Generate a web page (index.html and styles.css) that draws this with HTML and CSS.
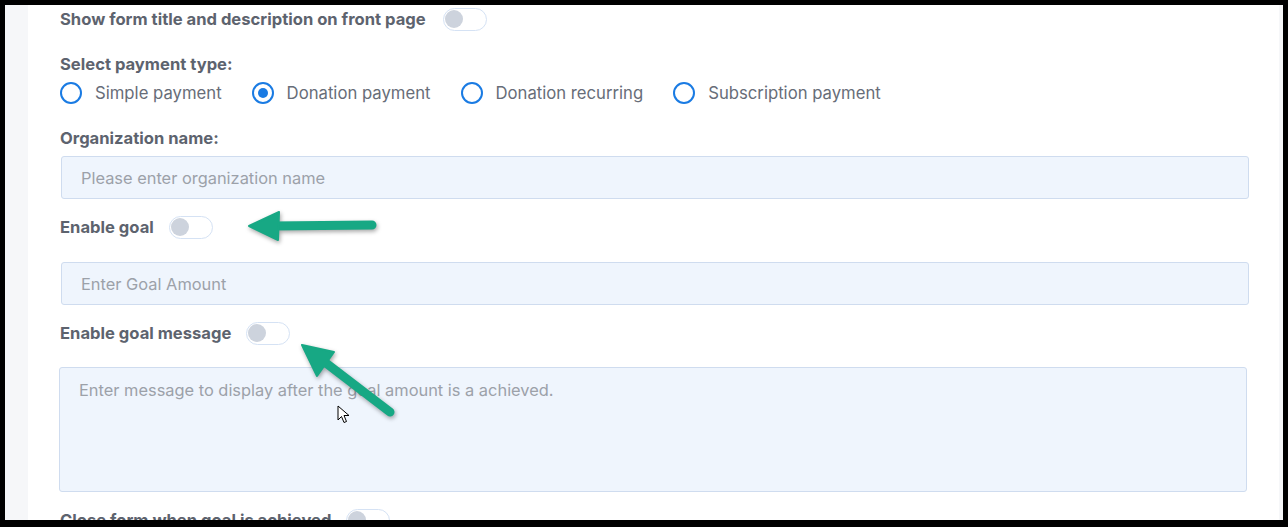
FILE: index.html
```html
<!DOCTYPE html>
<html lang="en">
<head>
    <meta charset="UTF-8">
    <meta name="viewport" content="width=device-width, initial-scale=1.0">
    <title>Payment form settings</title>
    <link rel="stylesheet" href="styles.css">
</head>
<body>
    <div class="frame">
        <div class="panel">
            <div class="switch-row first">
                <span class="label">Show form title and description on front page</span>
                <span class="toggle"></span>
            </div>

            <div class="label block">Select payment type:</div>
            <div class="radios">
                <label class="radio"><span class="dot"></span>Simple payment</label>
                <label class="radio"><span class="dot checked"></span>Donation payment</label>
                <label class="radio"><span class="dot"></span>Donation recurring</label>
                <label class="radio"><span class="dot"></span>Subscription payment</label>
            </div>

            <div class="label block">Organization name:</div>
            <input class="field" type="text" placeholder="Please enter organization name">

            <div class="switch-row">
                <span class="label">Enable goal</span>
                <span class="toggle"></span>
            </div>
            <input class="field spaced" type="text" placeholder="Enter Goal Amount">

            <div class="switch-row">
                <span class="label">Enable goal message</span>
                <span class="toggle"></span>
            </div>
            <textarea class="message" placeholder="Enter message to display after the goal amount is a achieved."></textarea>

            <div class="switch-row">
                <span class="label">Close form when goal is achieved</span>
                <span class="toggle"></span>
            </div>
        </div>
    </div>

    <!-- annotation arrows drawn over the screenshot -->
    <svg class="arrows" width="1288" height="527" viewBox="0 0 1288 527">
        <g fill="#17a884" stroke="#17a884" stroke-linecap="round" stroke-linejoin="round">
            <line x1="372" y1="225" x2="272" y2="226" stroke-width="9"/>
            <polygon points="249,226 279,212 278,240" stroke-width="2"/>
            <line x1="390" y1="412" x2="322" y2="360" stroke-width="9"/>
            <polygon points="302,345 334,352 317,376" stroke-width="2"/>
        </g>
    </svg>

    <!-- mouse pointer -->
    <svg class="cursor" width="14" height="20" viewBox="0 0 14 20">
        <path d="M1 1 L1 15 L4.5 11.5 L7 17.5 L9.5 16.5 L7 10.5 L12 10.5 Z" fill="#fff" stroke="#000" stroke-width="1"/>
    </svg>
</body>
</html>
```

FILE: styles.css
```css
body {
    margin: 0;
    background-color: #000;
    font-family: Inter, "Noto Sans", sans-serif;
    height: 527px;
    overflow: hidden;
}

.frame {
    margin: 5px 5px 0 5px;
    height: 515px;
    background-color: #f6f7f9; /* grey page edge */
    padding: 0 4px 0 23px;
    overflow: hidden;
}

.panel {
    background-color: #fff;
    height: 515px;
    padding: 3px 30px 0 32px;
    box-sizing: border-box;
    overflow: hidden;
}

.label {
    font-size: 16.6px;
    font-weight: 700;
    color: #5d636e;
    line-height: 20px;
}

.label.block {
    margin-top: 24px;
}

.switch-row {
    display: flex;
    align-items: center;
    gap: 15px;
    height: 22px;
    margin-top: 17px;
}

.switch-row.first {
    margin-top: 0;
    gap: 17px;
}

.toggle {
    width: 44px;
    height: 23px;
    box-sizing: border-box;
    border: 1.5px solid #d5e2f4;
    border-radius: 12px;
    background-color: #fff;
    position: relative;
}

.toggle::before {
    content: "";
    position: absolute;
    left: 1px;
    top: 1px;
    width: 18px;
    height: 18px;
    border-radius: 50%;
    background-color: #cdd3dd;
}

.radios {
    display: flex;
    gap: 30px;
    margin-top: 8px;
    height: 22px;
}

.radio {
    display: flex;
    align-items: center;
    gap: 13px;
    font-size: 16.7px;
    color: #676d78;
}

.dot {
    width: 22px;
    height: 22px;
    box-sizing: border-box;
    border: 2px solid #1a7be3;
    border-radius: 50%;
    position: relative;
}

.dot.checked::after {
    content: "";
    position: absolute;
    left: 4px;
    top: 4px;
    width: 10px;
    height: 10px;
    border-radius: 50%;
    background-color: #1a7be3;
}

.field,
.message {
    display: block;
    width: 1188px;
    box-sizing: border-box;
    background-color: #eff5fd;
    border: 1px solid #cfdcef;
    border-radius: 3px;
    font-family: inherit;
    font-size: 16.4px;
    color: #444;
    outline: none;
}

.field {
    height: 43px;
    margin: 8px 0 0 1px;
    padding: 0 19px;
}

.field.spaced {
    margin-top: 24px;
}

.message {
    height: 125px;
    margin: 23px 0 0 -1px;
    padding: 12px 19px;
    resize: none;
}

.field::placeholder,
.message::placeholder {
    color: #9ca1a9;
}

.arrows {
    position: absolute;
    left: 0;
    top: 0;
    filter: drop-shadow(1px 2px 2px rgba(0, 0, 0, 0.35));
    pointer-events: none;
}

.cursor {
    position: absolute;
    left: 337px;
    top: 405px;
}
```
